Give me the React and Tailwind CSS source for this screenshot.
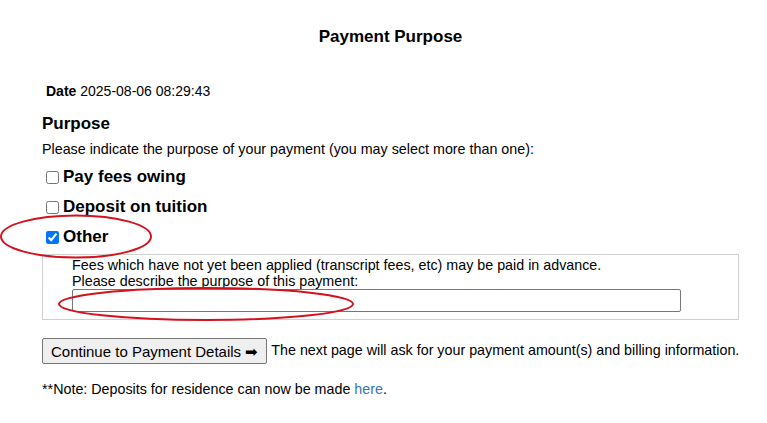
export default function App() {
  return (
    <div className="relative w-[767px] h-[423px] bg-white text-black font-['Liberation_Sans',Arial,sans-serif]">
      <div className="ml-[42px] w-[697px] pt-[27px]">
        <h1 className="text-center text-[17px] font-bold leading-[20px]">Payment Purpose</h1>

        <div className="mt-[36px] ml-[4px] text-[14px] leading-[16px]">
          <b>Date</b> 2025-08-06 08:29:43
        </div>

        <h2 className="mt-[15px] text-[17px] font-bold leading-[20px]">Purpose</h2>
        <p className="mt-[7px] text-[14.3px] leading-[16px]">
          Please indicate the purpose of your payment (you may select more than one):
        </p>

        <div className="mt-[10px] flex flex-col gap-[10px] text-[17px] font-bold leading-[20px]">
          <label className="flex items-center">
            <input type="checkbox" className="ml-[4px] mr-[4px] w-[13px] h-[13px]" />
            Pay fees owing
          </label>
          <label className="flex items-center">
            <input type="checkbox" className="ml-[4px] mr-[4px] w-[13px] h-[13px]" />
            Deposit on tuition
          </label>
          <label className="flex items-center">
            <input type="checkbox" defaultChecked className="ml-[4px] mr-[4px] w-[13px] h-[13px]" />
            Other
          </label>
        </div>

        <div className="mt-[7px] h-[66px] border border-[#cfcfcf] pl-[29px] pt-[2px] text-[14.3px] leading-[16px]">
          <div>Fees which have not yet been applied (transcript fees, etc) may be paid in advance.</div>
          <div>Please describe the purpose of this payment:</div>
          <input
            type="text"
            className="block w-[609px] h-[23px] border border-[#767676] rounded-[2px] bg-white"
          />
        </div>

        <div className="mt-[18px] flex items-center whitespace-nowrap">
          <button className="shrink-0 h-[26px] px-[8px] border border-[#767676] rounded-[2px] bg-[#efefef] text-[15px] leading-[17px]">
            Continue to Payment Details ➡
          </button>
          <span className="shrink-0 ml-[4px] text-[14.3px]">The next page will ask for your payment amount(s) and billing information.</span>
        </div>

        <p className="mt-[17px] text-[14.3px] leading-[16px]">
          **Note: Deposits for residence can now be made <a className="text-[#3a73b4]">here</a>.
        </p>
      </div>

      <svg className="absolute inset-0 pointer-events-none" width="767" height="423">
        <ellipse cx="76" cy="236.5" rx="75" ry="21" fill="none" stroke="#d4121f" strokeWidth="2" />
        <ellipse cx="206" cy="304" rx="147" ry="16" fill="none" stroke="#d4121f" strokeWidth="2" />
      </svg>
    </div>
  );
}
